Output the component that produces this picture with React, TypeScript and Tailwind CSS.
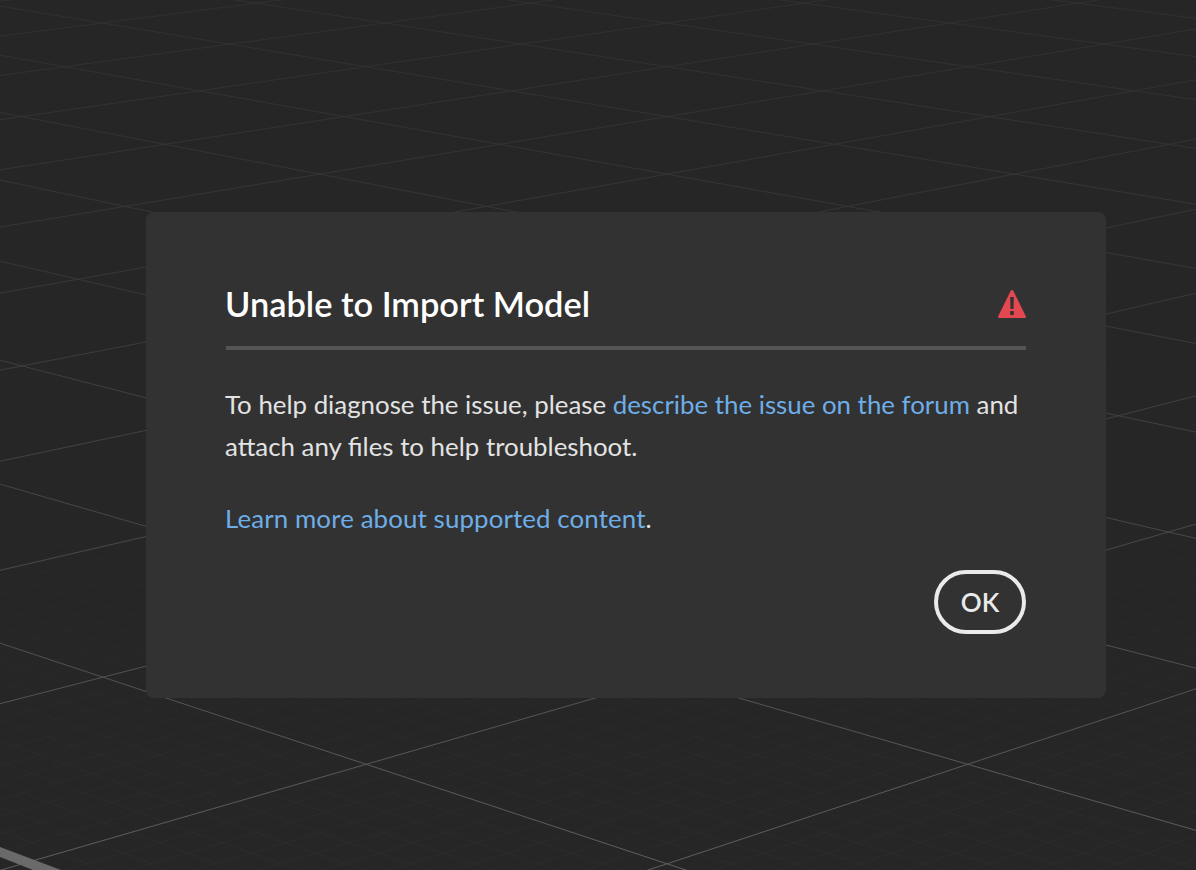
const W0 = 0.003541;
const DW = 0.0001105;

// lattice (a, b) on the floor plane -> screen
function project(a: number, b: number) {
  const w = W0 - DW * (a + b);
  return { x: 667 + (a - b) / 2 / w, y: -633 + 2.323 / w };
}

function gridLines(step: number) {
  const out: { x1: number; y1: number; x2: number; y2: number }[] = [];
  const count = Math.round(70 / step);
  for (let i = -count; i <= count; i++) {
    const k = i * step;
    const p1 = project(k, -40 - k);
    const p2 = project(k, 24 - k);
    const q1 = project(-40 - k, k);
    const q2 = project(24 - k, k);
    out.push({ x1: p1.x, y1: p1.y, x2: p2.x, y2: p2.y });
    out.push({ x1: q1.x, y1: q1.y, x2: q2.x, y2: q2.y });
  }
  return out;
}

function FloorGrid() {
  const minor = gridLines(0.1);
  const major = gridLines(1);
  return (
    <svg className="absolute inset-0" width="1196" height="870" viewBox="0 0 1196 870">
      <defs>
        <linearGradient id="majorFade" gradientUnits="userSpaceOnUse" x1="0" y1="0" x2="0" y2="870">
          <stop offset="0" stopColor="#2f2f2f" />
          <stop offset="0.3" stopColor="#363636" />
          <stop offset="0.7" stopColor="#4c4c4c" />
          <stop offset="1" stopColor="#5e5e5e" />
        </linearGradient>
        <linearGradient id="minorFade" gradientUnits="userSpaceOnUse" x1="0" y1="0" x2="0" y2="870">
          <stop offset="0" stopColor="#2c2c2c" stopOpacity="0" />
          <stop offset="0.5" stopColor="#2c2c2c" stopOpacity="0.1" />
          <stop offset="1" stopColor="#2e2e2e" stopOpacity="0.6" />
        </linearGradient>
      </defs>
      <g stroke="url(#minorFade)" strokeWidth="1">
        {minor.map((l, i) => (
          <line key={i} {...l} />
        ))}
      </g>
      <g stroke="url(#majorFade)" strokeWidth="1">
        {major.map((l, i) => (
          <line key={i} {...l} />
        ))}
      </g>
      <polygon points="0,847 61,870 33,870 0,857" fill="#6a6a6a" />
    </svg>
  );
}

function AlertIcon() {
  return (
    <svg width="28" height="28" viewBox="0 0 28 28" className="shrink-0">
      <path
        d="M12.7 0.8a1.5 1.5 0 0 1 2.6 0l12.5 25.4a1.2 1.2 0 0 1-1.1 1.8H1.3a1.2 1.2 0 0 1-1.1-1.8z"
        fill="#e34850"
      />
      <path d="M12.2 7h3.6l-.3 12h-3z" fill="#323232" />
      <rect x="12.2" y="21" width="3.6" height="4" rx="0.4" fill="#323232" />
    </svg>
  );
}

export default function App() {
  return (
    <div className="relative w-[1196px] h-[870px] overflow-hidden bg-[#262626] font-['Lato',sans-serif]">
      <FloorGrid />
      <div className="relative ml-[146px] pt-[212px] w-[960px]">
        <div className="h-[486px] rounded-[8px] bg-[#323232] px-[80px] pt-[70px]">
          <div className="flex items-center justify-between h-[44px]">
            <h2 className="-ml-px -mt-px text-[34.4px] leading-[44px] font-semibold text-white">Unable to Import Model</h2>
            <AlertIcon />
          </div>
          <div className="mt-[20px] h-[4px] bg-[#555555]" />
          <p className="-ml-px mt-[33px] text-[25.85px] leading-[42px] text-[#e3e3e3]">
            To help diagnose the issue, please{" "}
            <a className="text-[#6eaee8]">describe the issue on the forum</a> and attach any files to help
            troubleshoot.
          </p>
          <p className="-ml-px mt-[30px] text-[25.85px] leading-[42px] tracking-[0.12px] text-[#e3e3e3]">
            <a className="text-[#6eaee8]">Learn more about supported content</a>.
          </p>
          <div className="flex justify-end mt-[31px]">
            <button className="w-[92px] h-[64px] rounded-[32px] border-[4px] border-[#eaeaea] text-[26px] font-semibold text-[#eaeaea]">
              OK
            </button>
          </div>
        </div>
      </div>
    </div>
  );
}
